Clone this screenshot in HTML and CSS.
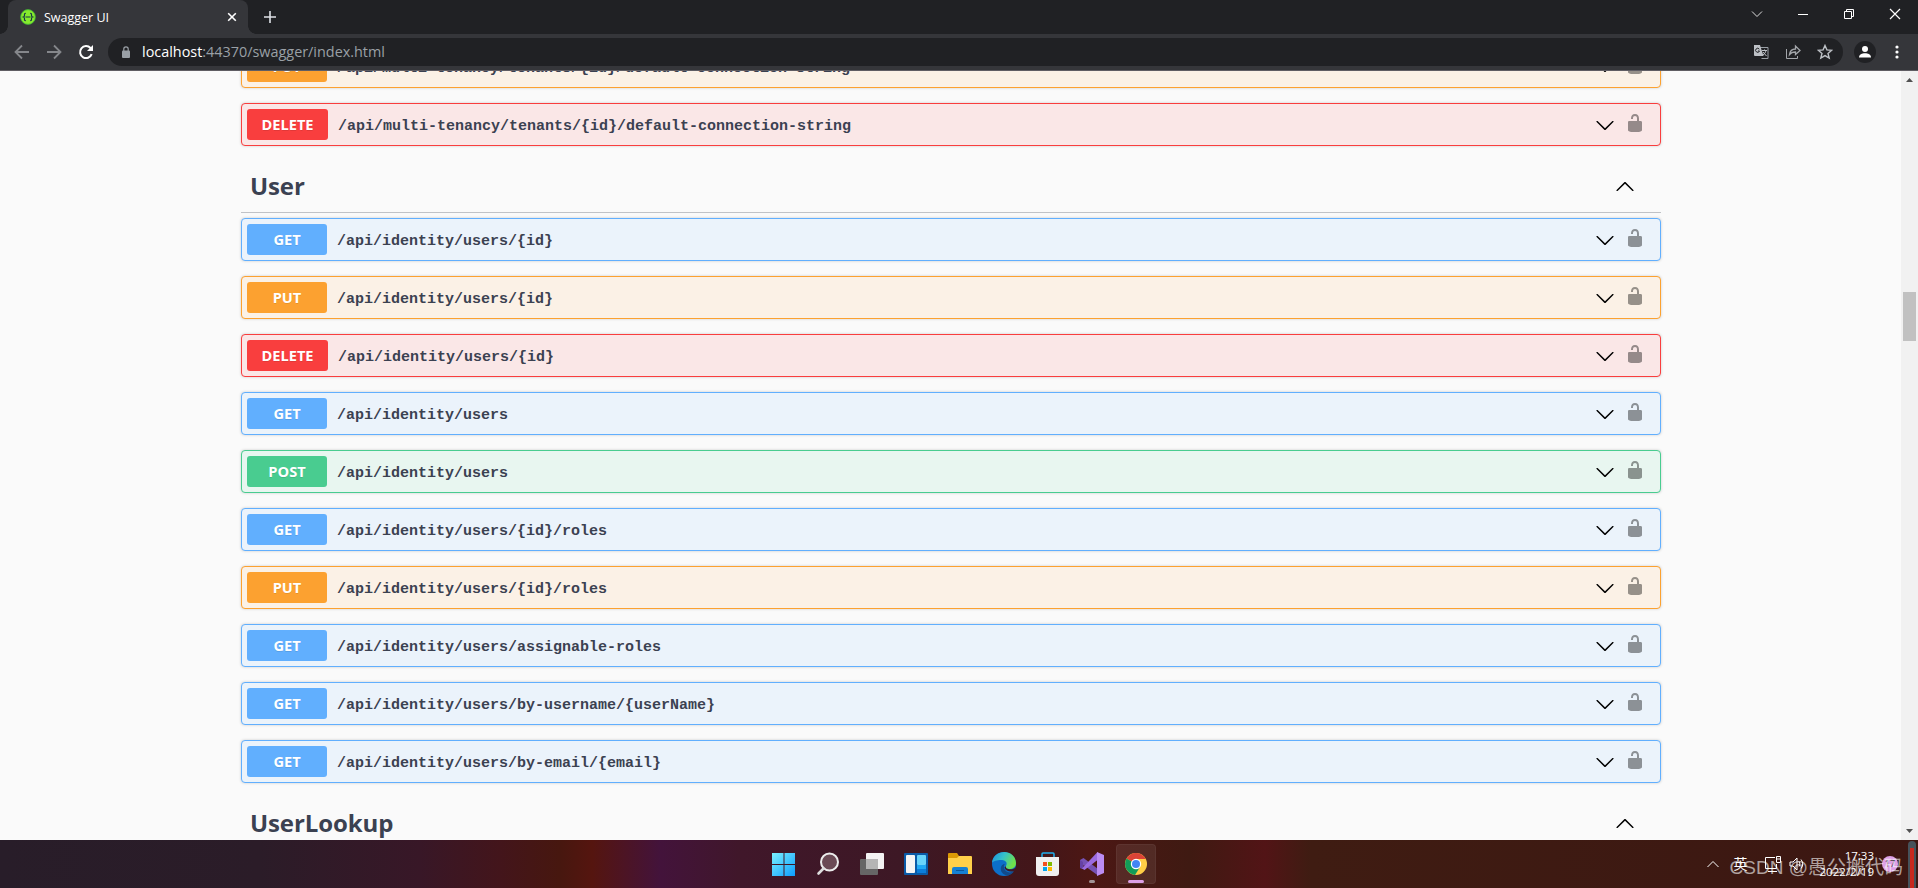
FILE: index.html
```html
<!DOCTYPE html>
<html lang="zh-CN">
<head>
<meta charset="UTF-8" />
<meta name="viewport" content="width=device-width, initial-scale=1" />
<title>Swagger UI</title>
<link rel="stylesheet" href="styles.css">
</head>
<body>

<!-- Shared icons -->
<svg class="sprite" aria-hidden="true">
  <symbol id="arrow-down" viewBox="0 0 20 20">
    <path d="M17.418 6.109c.272-.268.709-.268.979 0s.271.701 0 .969l-7.908 7.83c-.27.268-.707.268-.979 0l-7.908-7.83c-.27-.268-.27-.701 0-.969.271-.268.709-.268.979 0L10 13.25l7.418-7.141z" />
  </symbol>
  <symbol id="arrow-up" viewBox="0 0 20 20">
    <path d="M17.418 14.908c.272.268.709.268.979 0s.271-.701 0-.969l-7.908-7.83c-.27-.268-.707-.268-.979 0l-7.908 7.83c-.27.268-.27.701 0 .969.271.268.709.268.979 0L10 7.767l7.418 7.141z" />
  </symbol>
  <symbol id="unlocked" viewBox="0 0 20 20">
    <path d="M15.8 8H14V5.6C14 2.703 12.665 1 10 1 7.334 1 6 2.703 6 5.6V6h2v-.801C8 3.754 8.797 3 10 3c1.203 0 2 .754 2 2.199V8H4c-.553 0-1 .646-1 1.199V17c0 .549.428 1.139.951 1.307l1.197.387C5.672 18.861 6.55 19 7.1 19h5.8c.549 0 1.428-.139 1.951-.307l1.196-.387c.524-.167.953-.757.953-1.306V9.199C17 8.646 16.352 8 15.8 8z" />
  </symbol>
</svg>

<div class="titlebar">
  <div class="tab">
    <svg class="favicon" viewBox="0 0 16 16"><circle cx="8" cy="8" r="7.4" fill="#85ea2d" stroke="#3fae3a" stroke-width=".8"/><path d="M5.8 4.3c-1.500 0-1.300 1-1.300 2 0 1-.3 1.500-1 1.700.7.2 1 .7 1 1.700 0 1-.2 2 1.300 2M10.200 4.300c1.500 0 1.300 1 1.300 2 0 1 .3 1.500 1 1.700-.7.2-1 .7-1 1.700 0 1 .2 2-1.300 2M5.500 8h5" fill="none" stroke="#173647" stroke-width="1.200"/></svg>
    <span class="tab-title">Swagger UI</span>
    <svg class="tab-close" viewBox="0 0 10 10"><path d="M1.200 1.200l7.600 7.600M8.800 1.200L1.200 8.800" stroke="#fff" stroke-width="1.600"/></svg>
  </div>
  <svg class="new-tab" viewBox="0 0 12 12"><path d="M6 0v12M0 6h12" stroke="#dee1e6" stroke-width="1.600"/></svg>
  <div class="window-controls">
    <svg viewBox="0 0 12 12"><path d="M1 3.500l5 5 5-5" stroke="#ddd"/></svg>
    <svg viewBox="0 0 12 12"><path d="M1 6.500h10" stroke="#fff"/></svg>
    <svg viewBox="0 0 12 12"><path d="M1.500 3.500h7v7h-7zM3.500 3.500v-2h7v7h-2" stroke="#fff"/></svg>
    <svg viewBox="0 0 12 12"><path d="M1 1l10 10M11 1L1 11" stroke="#fff" stroke-width="1.200"/></svg>
  </div>
</div>

<div class="toolbar">
  <div class="nav">
    <svg viewBox="0 0 16 16"><path d="M15 8H2M8 1.500L1.500 8 8 14.500" stroke="#85878b" stroke-width="1.800"/></svg>
    <svg viewBox="0 0 16 16"><path d="M1 8h13M8 1.500L14.500 8 8 14.500" stroke="#85878b" stroke-width="1.800"/></svg>
    <svg viewBox="0 0 16 16"><path d="M13.700 10.200A6 6 0 1 1 12.500 4l1.500 1.500" stroke="#fff" stroke-width="2"/><path d="M15 1v6H9z" fill="#fff"/></svg>
  </div>
  <div class="address">
    <svg class="lock" viewBox="0 0 10 12"><rect x="1" y="4.500" width="8" height="7.500" rx="1" fill="#9aa0a6"/><path d="M2.800 5V3a2.200 2.200 0 0 1 4.400 0v2" fill="none" stroke="#9aa0a6" stroke-width="1.200"/></svg>
    <span class="url"><b>localhost</b>:44370/swagger/index.html</span>
    <div class="address-icons">
      <svg viewBox="0 0 16 16"><path d="M7 3.500h8v11H8.500" stroke="#9aa0a6"/><path d="M1 1h6l3.500 11H2a1 1 0 0 1-1-1z" fill="#bdc1c6"/><path d="M6.300 5.200A2 2 0 1 0 6.500 7H5" stroke="#202124"/><path d="M9 6.500h5M11.500 5.500v1M13 6.500c-.5 2-1.500 3.500-3 4.500M10 8l3.500 4" stroke="#bdc1c6"/></svg>
      <svg viewBox="0 0 16 16"><path d="M1.500 5v9.500h11V12" stroke="#a3a6aa"/><path d="M4.500 10.500c.5-4 3-5.500 6-5.500V2l4.500 4.500-4.500 4V8c-2.500 0-4.500.5-6 2.500z" stroke="#a3a6aa" stroke-width="1.300"/></svg>
      <svg viewBox="0 0 16 16"><path d="M8 1.500l1.900 4.400 4.800.4-3.700 3.100 1.200 4.700L8 11.600l-4.200 2.500L5 9.400 1.300 6.300l4.800-.4z" stroke="#bdc1c6" stroke-width="1.400"/></svg>
    </div>
  </div>
  <svg class="avatar" viewBox="0 0 22 22"><circle cx="11" cy="11" r="11" fill="#202124"/><circle cx="11" cy="8" r="3" fill="#fff"/><path d="M5 16.500c0-3 3-4.200 6-4.200s6 1.200 6 4.200z" fill="#fff"/></svg>
  <svg class="dots" viewBox="0 0 4 14"><g fill="#fff"><circle cx="2" cy="2" r="1.600"/><circle cx="2" cy="7" r="1.600"/><circle cx="2" cy="12" r="1.600"/></g></svg>
</div>

<div class="viewport">
  <div class="swagger-ui">
    <div class="opblock put">
      <span class="method">PUT</span>
      <span class="path">/api/multi-tenancy/tenants/{id}/default-connection-string</span>
      <svg class="arrow"><use href="#arrow-down"/></svg>
      <svg class="auth"><use href="#unlocked"/></svg>
    </div>
    <div class="opblock delete">
      <span class="method">DELETE</span>
      <span class="path">/api/multi-tenancy/tenants/{id}/default-connection-string</span>
      <svg class="arrow"><use href="#arrow-down"/></svg>
      <svg class="auth"><use href="#unlocked"/></svg>
    </div>

    <h3 class="tag">User <svg class="arrow"><use href="#arrow-up"/></svg></h3>

    <div class="opblock get">
      <span class="method">GET</span>
      <span class="path">/api/identity/users/{id}</span>
      <svg class="arrow"><use href="#arrow-down"/></svg>
      <svg class="auth"><use href="#unlocked"/></svg>
    </div>
    <div class="opblock put">
      <span class="method">PUT</span>
      <span class="path">/api/identity/users/{id}</span>
      <svg class="arrow"><use href="#arrow-down"/></svg>
      <svg class="auth"><use href="#unlocked"/></svg>
    </div>
    <div class="opblock delete">
      <span class="method">DELETE</span>
      <span class="path">/api/identity/users/{id}</span>
      <svg class="arrow"><use href="#arrow-down"/></svg>
      <svg class="auth"><use href="#unlocked"/></svg>
    </div>
    <div class="opblock get">
      <span class="method">GET</span>
      <span class="path">/api/identity/users</span>
      <svg class="arrow"><use href="#arrow-down"/></svg>
      <svg class="auth"><use href="#unlocked"/></svg>
    </div>
    <div class="opblock post">
      <span class="method">POST</span>
      <span class="path">/api/identity/users</span>
      <svg class="arrow"><use href="#arrow-down"/></svg>
      <svg class="auth"><use href="#unlocked"/></svg>
    </div>
    <div class="opblock get">
      <span class="method">GET</span>
      <span class="path">/api/identity/users/{id}/roles</span>
      <svg class="arrow"><use href="#arrow-down"/></svg>
      <svg class="auth"><use href="#unlocked"/></svg>
    </div>
    <div class="opblock put">
      <span class="method">PUT</span>
      <span class="path">/api/identity/users/{id}/roles</span>
      <svg class="arrow"><use href="#arrow-down"/></svg>
      <svg class="auth"><use href="#unlocked"/></svg>
    </div>
    <div class="opblock get">
      <span class="method">GET</span>
      <span class="path">/api/identity/users/assignable-roles</span>
      <svg class="arrow"><use href="#arrow-down"/></svg>
      <svg class="auth"><use href="#unlocked"/></svg>
    </div>
    <div class="opblock get">
      <span class="method">GET</span>
      <span class="path">/api/identity/users/by-username/{userName}</span>
      <svg class="arrow"><use href="#arrow-down"/></svg>
      <svg class="auth"><use href="#unlocked"/></svg>
    </div>
    <div class="opblock get">
      <span class="method">GET</span>
      <span class="path">/api/identity/users/by-email/{email}</span>
      <svg class="arrow"><use href="#arrow-down"/></svg>
      <svg class="auth"><use href="#unlocked"/></svg>
    </div>

    <h3 class="tag">UserLookup <svg class="arrow"><use href="#arrow-up"/></svg></h3>
  </div>

  <div class="scrollbar">
    <svg viewBox="0 0 7 4"><path d="M0 4L3.500 0 7 4z"/></svg>
    <div class="thumb"></div>
    <svg class="scroll-down" viewBox="0 0 7 4"><path d="M0 0l3.500 4L7 0z"/></svg>
  </div>
</div>

<div class="taskbar">
  <div class="apps">
    <div class="app">
      <svg viewBox="0 0 24 24"><defs><linearGradient id="win" x2="1" y2="1" gradientUnits="userSpaceOnUse" gradientTransform="scale(24)"><stop stop-color="#7df3ff"/><stop offset="1" stop-color="#0a9bff"/></linearGradient></defs><path d="M0 1h11.500v11H0zM12.500 1H23v11H12.500zM0 13h11.500v11H0zM12.500 13H23v11H12.500z" fill="url(#win)"/></svg>
    </div>
    <div class="app">
      <svg viewBox="0 0 24 24"><circle cx="13.500" cy="10" r="8.500" fill="#6b4a55" stroke="#ececec" stroke-width="2"/><path d="M7.500 16.500L2.500 21.500" stroke="#ddd" stroke-width="2.600" stroke-linecap="round"/></svg>
    </div>
    <div class="app">
      <svg viewBox="0 0 24 24"><rect x="6" y="1" width="18" height="16" rx="1" fill="#f3f3f3"/><rect y="7" width="18" height="16" rx="1" fill="#666"/><path d="M6 7h12v10H6z" fill="#b5b5b5"/></svg>
    </div>
    <div class="app">
      <svg viewBox="0 0 24 24"><rect y="1" width="24" height="22" rx="1" fill="#0a5ba8"/><rect x="2" y="3" width="9" height="18" rx="1" fill="#f5f5f5"/><rect x="13" y="3" width="9" height="10" rx="1" fill="#68d4fb"/><path d="M13 13h9v4h-9z" fill="#1fa9f5"/><path d="M13 17h9v4h-9z" fill="#0b7edb"/></svg>
    </div>
    <div class="app">
      <svg viewBox="0 0 24 24"><path d="M0 2q0-1 1-1h8l2 3v4H0z" fill="#dc9a05"/><path d="M0 6h9l2-2h12q1 0 1 1v17H0z" fill="#ffd04a"/><path d="M4 22v-5q0-2 2-2h12q2 0 2 2v5z" fill="#1681d4"/><path d="M8 18.500h8" stroke="#0a579b"/></svg>
    </div>
    <div class="app">
      <svg viewBox="0 0 24 24"><defs><linearGradient id="edge" x2="1" y2=".4"><stop stop-color="#1b8fe0"/><stop offset=".5" stop-color="#35c1c9"/><stop offset="1" stop-color="#6fe04a"/></linearGradient></defs><circle cx="12" cy="12" r="12" fill="#0c6fc9"/><path d="M0 11C1-3 23-4 24 11c0 4-3 6-7 6-3 0-4-1-3-3 2-4-1-6-5-6-4 0-8 1-9 3z" fill="url(#edge)"/><path d="M22 19c-4 3-9 1-10-3-.5-2 .5-4 1-4-6 0-6 11 3 11.500 3-.5 5-2.500 6-4.500z" fill="#114a8b"/><path d="M14 14c-1 3 5 5 10 1.500L22.500 19c-4 1.500-9 0-10-3.500z" fill="#3d1825"/></svg>
    </div>
    <div class="app">
      <svg viewBox="0 0 24 24"><path d="M6 6V2q0-1 1-1h10q1 0 1 1v4" fill="none" stroke="#1fb0ee" stroke-width="1.500"/><path d="M0 5h23v16q0 3-3 3H3q-3 0-3-3z" fill="#f0f0f0"/><path d="M7 10h4v4H7z" fill="#f25022"/><path d="M12 10h4v4h-4z" fill="#7fba00"/><path d="M7 15h4v4H7z" fill="#00a4ef"/><path d="M12 15h4v4h-4z" fill="#ffb900"/></svg>
    </div>
    <div class="app running">
      <svg viewBox="0 0 24 24"><path d="M0 8l3.500-2L18 17v6.500L3.500 13v4L0 16z" fill="#7652b4"/><path d="M0 8l3 2v7l-3-1z" fill="#6541a5"/><path d="M2 16.500L17.500 0v8L4.500 18z" fill="#9b6be0"/><path d="M17 0l7 3v18l-7 3z" fill="#bb8cf3"/></svg>
    </div>
    <div class="app active">
      <svg viewBox="0 0 24 24"><circle cx="12" cy="12" r="11" fill="#ffcd46"/><path d="M12 12L2.500 6.500a11 11 0 0 1 19 0L21.700 7H12z" fill="#db4437"/><path d="M2.500 6.500a11 11 0 0 0 8.500 16.400L16 15l-4-3z" fill="#129d58"/><circle cx="12" cy="12" r="5.200" fill="#fff"/><circle cx="12" cy="12" r="4" fill="#4285f4"/></svg>
    </div>
  </div>

  <div class="tray">
    <svg class="chevron" viewBox="0 0 12 8"><path d="M.5 7L6 1.500 11.500 7"/></svg>
    <span class="ime">英</span>
    <svg class="network" viewBox="0 0 16 16"><path d="M10 1.500H.5v11h11V8M3 15.500h9M11.500.500h4v6h-4zM11.500 3h4"/></svg>
    <svg class="volume" viewBox="0 0 16 16"><path d="M1 6h3l4-4v12l-4-4H1zM10 5.500q2 2.500 0 5M12 3.500q3.500 4.500 0 9"/></svg>
    <div class="clock"><span>17:33</span><span>2022/2/19</span></div>
    <span class="badge">17</span>
  </div>
  <div class="gauge"></div>
  <span class="watermark">CSDN @愚公搬代码</span>
</div>

</body>
</html>
```

FILE: styles.css
```css
* {
  box-sizing: border-box;
}
body {
  margin: 0;
  width: 1918px;
  height: 888px;
  overflow: hidden;
  display: flex;
  flex-direction: column;
  background: #fafafa;
  color: #3b4151;
  font-family: "Open Sans", "Noto Sans CJK SC", sans-serif;
}
svg {
  display: block;
  flex: none;
}
.sprite {
  position: absolute;
  width: 0;
  height: 0;
}

/* Browser window */
.titlebar {
  height: 34px;
  flex: none;
  display: flex;
  align-items: center;
  background: #202124;
  padding-left: 8px;
}
.tab {
  position: relative;
  width: 240px;
  height: 34px;
  display: flex;
  align-items: center;
  padding: 0 11px 0 12px;
  background: #35363a;
  border-radius: 8px 8px 0 0;
  color: #fff;
  font-size: 12.5px;
}
.tab::before, .tab::after {
  content: '';
  position: absolute;
  bottom: 0;
  width: 8px;
  height: 8px;
}
.tab::before {
  left: -8px;
  background: radial-gradient(circle at 0 0, #202124 7.5px, #35363a 8px);
}
.tab::after {
  right: -8px;
  background: radial-gradient(circle at 100% 0, #202124 7.5px, #35363a 8px);
}
.favicon {
  width: 16px;
  height: 16px;
  margin-right: 8px;
}
.tab-title {
  flex: 1;
}
.tab-close {
  width: 10px;
  height: 10px;
}
.new-tab {
  width: 12px;
  height: 12px;
  margin-left: 16px;
}
.window-controls {
  margin-left: auto;
  display: flex;
  gap: 34px;
  padding: 0 17px 6px 0;
}
.window-controls svg {
  width: 12px;
  height: 12px;
  fill: none;
}
.toolbar {
  height: 37px;
  flex: none;
  display: flex;
  align-items: center;
  background: #35363a;
  border-bottom: 1px solid #5f5d63;
}
.nav {
  display: flex;
  gap: 16px;
  padding: 0 14px;
}
.nav svg, .address-icons svg {
  width: 16px;
  height: 16px;
  fill: none;
}
.address {
  flex: 1;
  height: 28px;
  display: flex;
  align-items: center;
  background: #202124;
  border-radius: 14px;
  padding: 0 10px 0 13px;
}
.lock {
  width: 10px;
  height: 12px;
  margin-right: 11px;
}
.url {
  flex: 1;
  padding-bottom: 2px;
  color: #9aa0a6;
  font-size: 14.4px;
}
.url b {
  font-weight: 400;
  color: #fff;
}
.address-icons {
  display: flex;
  gap: 16px;
}
.avatar {
  width: 22px;
  height: 22px;
  margin: 0 19px 0 11px;
}
.dots {
  width: 4px;
  height: 14px;
  margin-right: 19px;
}

/* Page */
.viewport {
  flex: 1;
  min-height: 0;
  display: flex;
  justify-content: space-between;
  overflow: hidden;
}
.swagger-ui {
  width: 1420px;
  margin: -26px 0 0 241px;
}
.opblock {
  height: 43px;
  display: flex;
  align-items: center;
  margin-bottom: 15px;
  padding: 0 15px 0 5px;
  border: 1px solid;
  border-radius: 4px;
  box-shadow: 0 0 3px rgba(0, 0, 0, .19);
}
.method {
  min-width: 80px;
  height: 31px;
  line-height: 30px;
  border-radius: 3px;
  text-align: center;
  color: #fff;
  font-size: 14.6px;
  font-weight: 700;
  text-shadow: 0 1px 0 rgba(0, 0, 0, .1);
}
.path {
  flex: 1;
  padding: 4px 0 0 10px;
  font-family: "Liberation Mono", monospace;
  font-size: 15px;
  font-weight: 700;
}
.arrow {
  width: 20px;
  height: 20px;
}
.auth {
  width: 20px;
  height: 20px;
  margin: -4px 0 0 10px;
  opacity: .4;
}
.get {
  border-color: #61affe;
  background: #ebf3fb;
}
.get .method {
  background: #61affe;
}
.put {
  border-color: #fca130;
  background: #fbf1e6;
}
.put .method {
  background: #fca130;
}
.delete {
  border-color: #f93e3e;
  background: #fae7e7;
}
.delete .method {
  width: 81px;
  background: #f93e3e;
}
.post {
  border-color: #49cc90;
  background: #e8f6f0;
}
.post .method {
  background: #49cc90;
}
.tag {
  height: 52px;
  display: flex;
  align-items: center;
  justify-content: space-between;
  margin: 0 0 5px;
  padding: 0 26px 2px 9px;
  border-bottom: 1px solid rgba(59, 65, 81, .3);
  font-size: 24px;
  font-weight: 700;
  letter-spacing: -.1px;
}
.scrollbar {
  width: 17px;
  display: flex;
  flex-direction: column;
  align-items: center;
  background: #f1f1f1;
  padding: 7px 0;
}
.scrollbar svg {
  width: 7px;
  height: 4px;
  fill: #505050;
}
.thumb {
  width: 13px;
  height: 49px;
  margin-top: 210px;
  background: #c1c1c1;
}
.scroll-down {
  margin-top: auto;
}

/* Windows taskbar */
.taskbar {
  position: relative;
  height: 48px;
  flex: none;
  display: flex;
  background: linear-gradient(90deg, #281d29 0, #2b1c28 260px, #381727 420px, #43151b 500px, #47170f 560px, #55150f 592px, #43133b 660px, #40172a 740px, #3d1825 900px, #431619 1040px, #4c1714 1090px, #3f1a12 1190px, #521416 1265px, #3f1c12 1310px, #3c1712 1918px);
}
.apps {
  display: flex;
  gap: 4px;
  padding: 4px 0 0 764px;
}
.app {
  position: relative;
  width: 40px;
  height: 40px;
  border-radius: 4px;
  padding: 8px;
}
.app svg {
  width: 24px;
  height: 24px;
}
.app.active {
  background: rgba(255, 255, 255, .08);
  border: 1px solid rgba(255, 255, 255, .05);
  padding: 7px;
}
.running::after, .active::after {
  content: '';
  position: absolute;
  left: 17px;
  bottom: 1px;
  width: 6px;
  height: 3px;
  border-radius: 2px;
  background: #a29496;
}
.active::after {
  left: 11px;
  bottom: 0;
  width: 16px;
  background: #dda0e6;
}
.tray {
  margin-left: auto;
  display: flex;
  align-items: center;
  padding-right: 20px;
  color: #fff;
}
.tray svg {
  fill: none;
  stroke: #fff;
}
.chevron {
  width: 12px;
  height: 8px;
  margin-right: 15px;
}
.ime {
  font-size: 14px;
  line-height: 20px;
}
.network {
  width: 16px;
  height: 16px;
  margin-left: 17px;
}
.volume {
  width: 16px;
  height: 16px;
  margin: 0 15px 0 8px;
}
.clock {
  display: flex;
  flex-direction: column;
  align-items: flex-end;
  font-size: 11.5px;
  line-height: 16px;
}
.badge {
  width: 16px;
  height: 16px;
  margin-left: 8px;
  border-radius: 50%;
  background: #dda0e6;
  color: #444;
  font-size: 9px;
  line-height: 16px;
  text-align: center;
}
.gauge {
  position: absolute;
  right: 2px;
  top: 1px;
  width: 8px;
  height: 47px;
  border: 2px solid #46525a;
  border-top-width: 7px;
  border-bottom: 0;
  border-radius: 4px 4px 0 0;
  background: #c8281e;
}
.watermark {
  position: absolute;
  right: 15px;
  top: 14px;
  color: rgba(255, 255, 255, .6);
  font-family: "Liberation Sans", "Noto Sans CJK SC", sans-serif;
  font-size: 19px;
  line-height: 28px;
  white-space: nowrap;
}
```
